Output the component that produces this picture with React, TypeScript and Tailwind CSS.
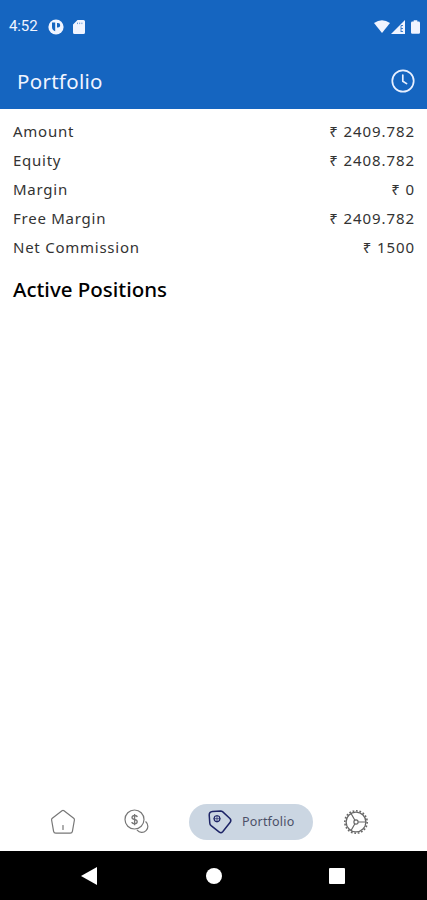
import React from "react";

type Row = {
  label: string;
  value: string;
};

const rows: Row[] = [
  { label: "Amount", value: "₹ 2409.782" },
  { label: "Equity", value: "₹ 2408.782" },
  { label: "Margin", value: "₹ 0" },
  { label: "Free Margin", value: "₹ 2409.782" },
  { label: "Net Commission", value: "₹ 1500" },
];

const StatusBar = () => (
  <div className="flex h-[53px] items-center pl-[9px] pr-[7px] text-[#f0f4ff]">
    <span className="w-[40px] font-[Roboto,sans-serif] text-[15px] tracking-[-0.1px]">
      4:52
    </span>
    <svg width="16" height="16" viewBox="0 0 16 16" className="-ml-px">
      <circle cx="8" cy="8" r="7.6" fill="currentColor" />
      <path
        d="M4 3.6h3.2v8.6A4.7 4.7 0 0 1 4 7.5zM9 4h1a2.2 2.2 0 0 1 0 4.4H9z"
        fill="#1565c0"
      />
    </svg>
    <svg width="12" height="14" viewBox="0 0 12 14" className="ml-[9px]">
      <path
        d="M4.5 0h6A1.5 1.5 0 0 1 12 1.5v11a1.5 1.5 0 0 1-1.5 1.5h-9A1.5 1.5 0 0 1 0 12.5v-8z"
        fill="currentColor"
      />
      <path d="M4.5 2.6v1.5M6.7 2.6v1.5M8.9 2.6v1.5" stroke="#1565c0" strokeWidth="0.6" />
    </svg>
    <svg width="16" height="13" viewBox="0 0 16 13" className="ml-auto">
      <path d="M0 3Q8-2.6 16 3L8 13z" fill="currentColor" />
    </svg>
    <svg width="14" height="14" viewBox="0 0 14 14" className="ml-[1px]">
      <path d="M14 0v14H0z" fill="currentColor" />
      <path d="M10 5.5V12M12 5.5h-2M12 8.5h-2M12 11.5h-2" stroke="#1565c0" strokeWidth="0.8" />
    </svg>
    <svg width="9" height="14" viewBox="0 0 10 15" className="ml-[6px]">
      <path
        d="M3 0h4v1.5h1.5A1.5 1.5 0 0 1 10 3v10.5A1.5 1.5 0 0 1 8.5 15h-7A1.5 1.5 0 0 1 0 13.5V3a1.5 1.5 0 0 1 1.5-1.5H3z"
        fill="currentColor"
      />
    </svg>
  </div>
);

const ClockIcon = () => (
  <svg width="24" height="24" viewBox="0 0 24 24" fill="none" stroke="#e8f0ff" strokeWidth="1.7">
    <circle cx="12" cy="12" r="10.7" />
    <path d="M11.8 6v6.2l3.8 2.4" strokeLinecap="round" strokeLinejoin="round" />
  </svg>
);

const HomeIcon = () => (
  <svg width="26" height="26" viewBox="0 0 26 26" fill="none" stroke="#777777" strokeWidth="1.2">
    <path
      d="M12 1.8q1-.7 2 0l9.7 7.4q.9.7.7 1.8l-2 11.3q-.3 1.9-2.2 1.9H5.8q-1.9 0-2.2-1.9L1.6 11q-.2-1.1.7-1.8z"
      strokeLinejoin="round"
    />
    <path d="M13 16.5v4" strokeLinecap="round" />
  </svg>
);

const CoinsIcon = () => (
  <svg width="26" height="26" viewBox="0 0 26 26" fill="none" stroke="#777777" strokeWidth="1.2">
    <circle cx="10.5" cy="10.5" r="9.5" />
    <path
      d="M13.2 8.2q-.2-1.7-2.6-1.7T8 8.5q0 1.5 2.6 2t2.6 2.3q0 1.9-2.6 1.9T7.9 13M10.6 5v11.2"
      strokeWidth="1.3"
    />
    <path d="M21.8 12.8a6 6 0 1 1-8.6 8.3" strokeLinecap="round" />
  </svg>
);

const TagIcon = () => (
  <svg width="26" height="26" viewBox="0 0 26 26" fill="none" stroke="#1d2466" strokeWidth="1.5">
    <path
      d="M5.5 2.5 13.5 2q1.3 0 2.3.9l7.1 6.6q1.7 1.7.3 3.7l-7.5 9.6q-1.6 1.8-3.4.4l-8.2-6.5q-1.2-1-1.3-2.5L2.2 6q0-3.2 3.3-3.5z"
      strokeLinejoin="round"
    />
    <circle cx="10" cy="9.7" r="2.9" strokeWidth="1.1" />
    <path d="M10 6v7.4M6.3 9.7h7.4" strokeWidth="0.7" />
  </svg>
);

const GearIcon = () => (
  <svg width="26" height="26" viewBox="0 0 26 26" fill="none" stroke="#686868">
    <circle cx="13" cy="13" r="9.9" strokeWidth="1.3" />
    {/* teeth */}
    <circle cx="13" cy="13" r="11.2" strokeWidth="1.6" pathLength="80" strokeDasharray="2 2" />
    <circle cx="13" cy="13" r="2.1" strokeWidth="1.2" />
    <path d="M15.2 13h8M11.9 11.2l-4-7M11.9 14.8l-4 7" strokeWidth="1.2" />
  </svg>
);

const App: React.FC = () => {
  return (
    <div className="flex h-[900px] w-[427px] flex-col overflow-hidden bg-white font-['Noto_Sans','Open_Sans',sans-serif]">
      {/* header */}
      <header className="h-[109px] shrink-0 bg-[#1565c0]">
        <StatusBar />
        <div className="flex h-[56px] items-center justify-between pl-[17px] pr-[12px]">
          <h1 className="text-[20.5px] tracking-[0.3px] text-[#f0f4ff]">Portfolio</h1>
          <ClockIcon />
        </div>
      </header>

      {/* balances */}
      <main className="flex flex-1 flex-col px-[13px] pt-[8px] text-black">
        {rows.map((row) => (
          <div
            key={row.label}
            className="flex h-[29px] items-center justify-between text-[15px] text-[#333333]"
          >
            <span className="tracking-[0.75px]">{row.label}</span>
            <span className="-mr-[0.9px] tracking-[0.9px]">{row.value}</span>
          </div>
        ))}
        <h2 className="mt-[12px] text-[20.5px] font-medium leading-[30px]">Active Positions</h2>
      </main>

      {/* tabs */}
      <nav className="flex h-[58px] shrink-0 items-center pl-[50px]">
        <HomeIcon />
        <div className="ml-[48px] flex">
          <CoinsIcon />
        </div>
        <div className="ml-[39px] flex h-[36px] w-[124px] items-center rounded-full bg-[#cbd6e2] pl-[18px]">
          <TagIcon />
          <span className="ml-[9px] text-[12.5px] tracking-[0.2px] text-[#4b5068]">Portfolio</span>
        </div>
        <div className="ml-[30px] flex">
          <GearIcon />
        </div>
      </nav>

      {/* system buttons */}
      <footer className="flex h-[49px] shrink-0 items-center bg-black pl-[81px] text-white">
        <svg width="16" height="18" viewBox="0 0 16 18">
          <path d="M16 0v18L0 9z" fill="currentColor" />
        </svg>
        <div className="ml-[109px] h-4 w-4 rounded-full bg-white" />
        <div className="ml-[107px] h-4 w-4 rounded-[1px] bg-white" />
      </footer>
    </div>
  );
};

export default App;
